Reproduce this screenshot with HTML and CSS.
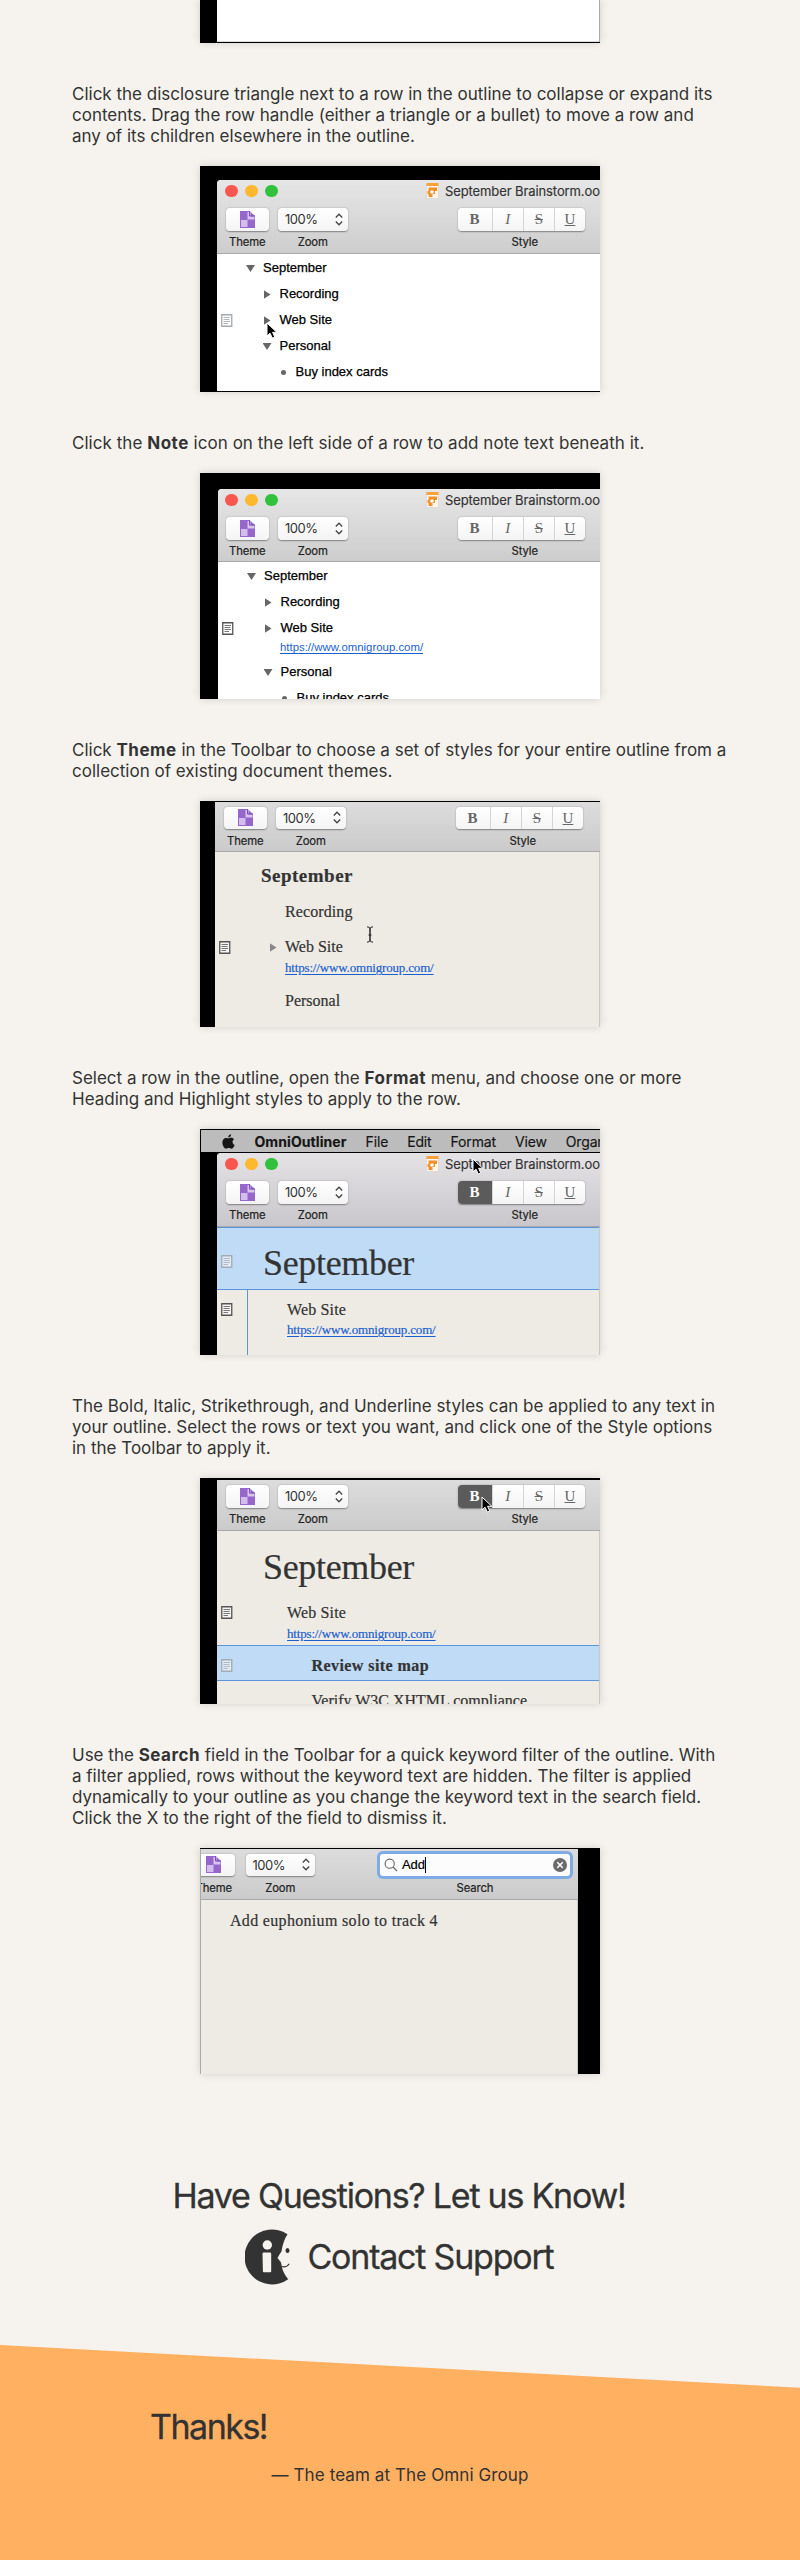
FILE: index.html
```html
<!DOCTYPE html>
<html lang="en">
<head>
<meta charset="utf-8">
<title>OmniOutliner Basics</title>
<link rel="stylesheet" href="styles.css">
</head>
<body>
<svg width="0" height="0" class="defs" aria-hidden="true">
  <symbol id="theme" viewBox="0 0 15 17"><path d="M0 0h9.5L15 5v12H0z" fill="#9566cc"/><path d="M7.5 1v7.500h7V5.500h-4V1z" fill="#d9c4ef"/><path d="M1 9h6.500v7H1z" fill="#d3bdeb"/><path d="M9.500 0v5H15" fill="none" stroke="#7c50b4"/></symbol>
  <symbol id="stepper" viewBox="0 0 8 13"><path d="M.8 4.500 4 1.200l3.200 3.300M.8 8.500 4 11.800l3.200-3.300" fill="none" stroke="#444" stroke-width="1.300"/></symbol>
  <symbol id="note" viewBox="0 0 12 13"><path d="M.75.75h10v11.500h-10z" fill="#fff" fill-opacity=".5" stroke="currentColor" stroke-width="1.300"/><path d="M2.500 3.500h6.500M2.500 5.500h6M2.500 7.500h6.500M2.500 9.500h4.500" stroke="currentColor" stroke-width=".8"/></symbol>
  <symbol id="doc" viewBox="0 0 13 16"><path d="M.5.500h12v15H.5z" fill="#fbf6ef" stroke="#d9d0c6" stroke-width=".6"/><path d="M.5 0h12v3H.5z" fill="#f7a13a"/><path d="M2.500 4.500h8.500v3.500H9v3H6.500v3H2.500V11H1.500V8h1z" fill="#f19128"/><path d="M4 9h4M6 7v4" stroke="#fff" stroke-width="1.300"/></symbol>
  <symbol id="pointer" viewBox="0 0 12 18"><path d="M1 1v13l3-2.800L6.300 16l2.400-1.100L6.600 10.300h4.200z" fill="#000" stroke="#fff" stroke-width="1"/></symbol>
</svg>

<main class="guide">
  <figure class="shot tail"><div class="blank"></div></figure>

  <p>Click the disclosure triangle next to a row in the outline to collapse or expand its<br>contents. Drag the row handle (either a triangle or a bullet) to move a row and<br>any of its children elsewhere in the outline.</p>
  <figure class="shot first">
    <div class="window">
      <div class="head">
        <div class="title"><i class="light red"></i><i class="light amber"></i><i class="light green"></i><svg class="doc"><use href="#doc"/></svg><span>September Brainstorm.oo</span></div>
        <div class="tools">
          <div class="tool t-theme"><div class="btn"><svg class="i-theme"><use href="#theme"/></svg></div><span>Theme</span></div>
          <div class="tool t-zoom"><div class="btn"><span class="pct">100%</span><svg class="i-step"><use href="#stepper"/></svg></div><span>Zoom</span></div>
          <div class="tool t-style"><div class="btn"><b>B</b><em>I</em><s>S</s><u>U</u></div><span>Style</span></div>
        </div>
      </div>
      <div class="outline plain">
        <div class="row l0"><i class="slot"></i><i class="down"></i><span>September</span></div>
        <div class="row l1"><i class="slot"></i><i class="right"></i><span>Recording</span></div>
        <div class="row l1"><svg class="slot pale"><use href="#note"/></svg><i class="right"></i><span>Web Site</span></div>
        <div class="row l1"><i class="slot"></i><i class="down"></i><span>Personal</span></div>
        <div class="row l2"><i class="slot"></i><i class="dot"></i><span>Buy index cards</span></div>
      </div>
    </div>
    <svg class="pointer p1"><use href="#pointer"/></svg>
  </figure>

  <p class="loose">Click the <strong>Note</strong> icon on the left side of a row to add note text beneath it.</p>
  <figure class="shot second">
    <div class="window">
      <div class="head">
        <div class="title"><i class="light red"></i><i class="light amber"></i><i class="light green"></i><svg class="doc"><use href="#doc"/></svg><span>September Brainstorm.oo</span></div>
        <div class="tools">
          <div class="tool t-theme"><div class="btn"><svg class="i-theme"><use href="#theme"/></svg></div><span>Theme</span></div>
          <div class="tool t-zoom"><div class="btn"><span class="pct">100%</span><svg class="i-step"><use href="#stepper"/></svg></div><span>Zoom</span></div>
          <div class="tool t-style"><div class="btn"><b>B</b><em>I</em><s>S</s><u>U</u></div><span>Style</span></div>
        </div>
      </div>
      <div class="outline plain">
        <div class="row l0"><i class="slot"></i><i class="down"></i><span>September</span></div>
        <div class="row l1"><i class="slot"></i><i class="right"></i><span>Recording</span></div>
        <div class="row l1"><svg class="slot"><use href="#note"/></svg><i class="right"></i><span>Web Site</span></div>
        <div class="memo"><a>https://www.omnigroup.com/</a></div>
        <div class="row l1"><i class="slot"></i><i class="down"></i><span>Personal</span></div>
        <div class="row l2"><i class="slot"></i><i class="dot"></i><span>Buy index cards</span></div>
      </div>
    </div>
  </figure>

  <p>Click <strong>Theme</strong> in the Toolbar to choose a set of styles for your entire outline from a<br>collection of existing document themes.</p>
  <figure class="shot third">
    <div class="window">
      <div class="head">
        <div class="tools">
          <div class="tool t-theme"><div class="btn"><svg class="i-theme"><use href="#theme"/></svg></div><span>Theme</span></div>
          <div class="tool t-zoom"><div class="btn"><span class="pct">100%</span><svg class="i-step"><use href="#stepper"/></svg></div><span>Zoom</span></div>
          <div class="tool t-style"><div class="btn"><b>B</b><em>I</em><s>S</s><u>U</u></div><span>Style</span></div>
        </div>
      </div>
      <div class="outline book">
        <div class="row h2"><i class="slot"></i><span>September</span></div>
        <div class="row r-rec"><i class="slot"></i><span>Recording</span></div>
        <div class="row r-web"><svg class="slot"><use href="#note"/></svg><i class="right"></i><span>Web Site</span></div>
        <div class="memo"><a>https://www.omnigroup.com/</a></div>
        <div class="row r-per"><i class="slot"></i><span>Personal</span></div>
      </div>
    </div>
    <svg class="ibeam" viewBox="0 0 8 17"><path d="M1 .8Q4 .8 4 3v11q0 2.200-3 2.200M7 .8Q4 .8 4 3v11q0 2.200 3 2.200M2.500 9h3" fill="none" stroke="#222"/></svg>
  </figure>

  <p>Select a row in the outline, open the <strong>Format</strong> menu, and choose one or more<br>Heading and Highlight styles to apply to the row.</p>
  <figure class="shot fourth">
    <div class="menubar"><svg class="apple" viewBox="0 0 14 16"><path d="M9.800.2c.1 1.800-1.300 3.400-3 3.400C6.600 1.900 8.200.4 9.800.2zM7 4.600c.8 0 1.700-.7 3.100-.7 1.100 0 2.300.6 3 1.700-2.600 1.500-2.200 5 .5 6.100-.7 1.900-2 4-3.400 4-1.100 0-1.500-.7-2.900-.7s-1.900.7-2.900.7C2.600 15.700.4 12.300.4 9c0-3.200 2-4.900 3.900-4.900 1.200 0 2.100.5 2.700.5z" fill="#151515"/></svg><strong>OmniOutliner</strong><span>File</span><span>Edit</span><span>Format</span><span>View</span><span>Organ</span></div>
    <div class="window">
      <div class="head">
        <div class="title"><i class="light red"></i><i class="light amber"></i><i class="light green"></i><svg class="doc"><use href="#doc"/></svg><span>September Brainstorm.oo</span></div>
        <div class="tools">
          <div class="tool t-theme"><div class="btn"><svg class="i-theme"><use href="#theme"/></svg></div><span>Theme</span></div>
          <div class="tool t-zoom"><div class="btn"><span class="pct">100%</span><svg class="i-step"><use href="#stepper"/></svg></div><span>Zoom</span></div>
          <div class="tool t-style"><div class="btn"><b class="on">B</b><em>I</em><s>S</s><u>U</u></div><span>Style</span></div>
        </div>
      </div>
      <div class="outline book">
        <div class="row h1 picked"><svg class="slot pale"><use href="#note"/></svg><span>September</span></div>
        <div class="kids">
          <div class="row r-site"><svg class="slot"><use href="#note"/></svg><span>Web Site</span></div>
          <div class="memo"><a>https://www.omnigroup.com/</a></div>
        </div>
      </div>
    </div>
    <svg class="pointer p4"><use href="#pointer"/></svg>
  </figure>

  <p>The Bold, Italic, Strikethrough, and Underline styles can be applied to any text in<br>your outline. Select the rows or text you want, and click one of the Style options<br>in the Toolbar to apply it.</p>
  <figure class="shot fifth">
    <div class="window">
      <div class="head">
        <div class="tools">
          <div class="tool t-theme"><div class="btn"><svg class="i-theme"><use href="#theme"/></svg></div><span>Theme</span></div>
          <div class="tool t-zoom"><div class="btn"><span class="pct">100%</span><svg class="i-step"><use href="#stepper"/></svg></div><span>Zoom</span></div>
          <div class="tool t-style"><div class="btn"><b class="on">B</b><em>I</em><s>S</s><u>U</u></div><span>Style</span></div>
        </div>
      </div>
      <div class="outline book">
        <div class="row h1"><i class="slot"></i><span>September</span></div>
        <div class="row r-site"><svg class="slot"><use href="#note"/></svg><span>Web Site</span></div>
        <div class="memo"><a>https://www.omnigroup.com/</a></div>
        <div class="row r-deep picked"><svg class="slot pale"><use href="#note"/></svg><strong>Review site map</strong></div>
        <div class="row r-deep last"><i class="slot"></i><span>Verify W3C XHTML compliance</span></div>
      </div>
    </div>
    <svg class="pointer p5"><use href="#pointer"/></svg>
  </figure>

  <p>Use the <strong>Search</strong> field in the Toolbar for a quick keyword filter of the outline. With<br>a filter applied, rows without the keyword text are hidden. The filter is applied<br>dynamically to your outline as you change the keyword text in the search field.<br>Click the X to the right of the field to dismiss it.</p>
  <figure class="shot sixth">
    <div class="window">
      <div class="head">
        <div class="tools">
          <div class="tool t-theme"><div class="btn"><svg class="i-theme"><use href="#theme"/></svg></div><span>Theme</span></div>
          <div class="tool t-zoom"><div class="btn"><span class="pct">100%</span><svg class="i-step"><use href="#stepper"/></svg></div><span>Zoom</span></div>
          <div class="tool t-search"><div class="field"><svg class="glass" viewBox="0 0 14 14"><path d="M10.300 5.700a4.600 4.600 0 1 1-9.200 0 4.600 4.600 0 0 1 9.200 0zM9 9l4 4" fill="none" stroke="#666" stroke-width="1.100"/></svg><span class="typed">Add</span><svg class="clear" viewBox="0 0 14 14"><circle cx="7" cy="7" r="7" fill="#6b6b6b"/><path d="m4.300 4.300 5.400 5.400m0-5.400L4.300 9.700" stroke="#fff" stroke-width="1.600"/></svg></div><span>Search</span></div>
        </div>
      </div>
      <div class="outline book"><div class="row hit">Add euphonium solo to track 4</div></div>
    </div>
  </figure>
</main>

<section class="support">
  <h2>Have Questions? Let us Know!</h2>
  <h2 class="contact"><svg viewBox="0 0 46 56"><path d="M42.500 5.200A27.500 27.500 0 1 0 43.200 50.200Q38 44 36.800 37.500 37 33 34.300 31.300L32.500 29Q34.500 25 36.500 22.500 38 12 42.500 5.200z" fill="#333"/><circle cx="22.300" cy="16" r="4.700" fill="#f6f3ee"/><path d="M17.500 24.800q0-1.300 1.300-1.300h6.100q1.300 0 1.300 1.300v17.500q0 1-1 1h-6.300q-1 0-1-1z" fill="#f6f3ee"/><ellipse cx="42.500" cy="21.500" rx="2" ry="2.600" fill="#333"/><path d="M36.500 37.500q5 1.500 7.800-2.800" fill="none" stroke="#333" stroke-width="1.100"/></svg><span>Contact Support</span></h2>
</section>

<footer class="thanks">
  <h2>Thanks!</h2>
  <p>— The team at The Omni Group</p>
</footer>
</body>
</html>
```
FILE: styles.css
```css
* { box-sizing: border-box; }
body { margin: 0; background: #f6f3ee; color: #333; font: 17px/21px Inter, sans-serif; }
i { font-style: normal; }
svg { flex: none; }
.defs { position: absolute; }
.guide { padding: 0 72px; }
.guide p { margin: 41px 0 19px; white-space: nowrap; }
.guide p strong { font-weight: 700; letter-spacing: .5px; }
.guide .loose { letter-spacing: .04px; }

.shot { position: relative; width: 400px; height: 226px; margin: 0 auto; background: #000; overflow: hidden; box-shadow: 0 0 8px rgba(0, 0, 0, .15); }
.tail { height: 43px; padding: 0 1px 1px 17px; background: linear-gradient(90deg, #000 17px, #aaa 17px) top / 100% 42px no-repeat #000; }
.blank { height: 42px; background: #fff; border-bottom: 1px solid #ddd; }

.window { display: flex; flex-direction: column; height: 226px; margin-left: 17px; overflow: hidden; background: #fff; }
.first { padding: 14px 0 1px; }
.first .window { height: 211px; }
.second { padding-top: 16px; }
.second .window { height: 210px; margin-left: 18px; }
.first .window, .second .window, .fourth .window { border-top-left-radius: 4px; }

.head { flex: none; background: linear-gradient(#e6e6e6, #cdcdcd); border-bottom: 1px solid #a9a9a9; color: #222; }
.first .head { height: 74px; }
.second .head { height: 73px; }
.second .head > div { margin-left: -1px; }
.title { display: flex; align-items: center; height: 22px; padding-left: 8px; font-size: 13px; white-space: nowrap; letter-spacing: -.1px; color: #333; -webkit-text-stroke: .15px; }
.title span { margin-left: 6px; }
.light { flex: none; width: 12.500px; height: 12.500px; margin-right: 7.500px; border-radius: 50%; }
.red { background: #f9564f; }
.amber { background: #fcb92e; }
.green { background: #30c23c; }
.doc { width: 13px; height: 16px; margin-left: 141px; }

.tools { display: flex; height: 51px; padding: 5px 0 0 9px; }
.title + .tools { padding-top: 6px; }
.tool { display: flex; flex-direction: column; align-items: center; font-size: 11.300px; line-height: 14px; letter-spacing: -.1px; -webkit-text-stroke: .2px; }
.tool > span { margin-top: 4.500px; }
.btn { display: flex; align-items: center; width: 100%; height: 22.500px; border-radius: 4px; background: linear-gradient(#fff, #f4f4f4); box-shadow: 0 .5px 1.500px rgba(0, 0, 0, .4); overflow: hidden; -webkit-text-stroke: 0; }
.t-theme { width: 42.500px; }
.t-zoom { width: 69.500px; margin-left: 9.500px; }
.t-style { width: 127.500px; margin-left: 110px; }
.t-style > span { margin-right: -7px; }
.i-theme { width: 15px; height: 17px; margin: 0 auto; }
.t-zoom .btn { justify-content: space-between; padding: 0 5px 0 7px; font-size: 13px; letter-spacing: -.5px; color: #333; }
.i-step { width: 8px; height: 13px; }
.btn > b, .btn > em, .btn > s, .btn > u { flex: 1; height: 100%; padding-left: 0; text-align: center; font: 15px/22px "Liberation Serif", serif; color: #666; border-left: 1px solid #d5d5d5; }
.btn > b { flex: 0 0 34px; border: 0; font-weight: 700; }
.btn > em { font-style: italic; }
.btn > .on { background: #5b5b5b; color: #fff; }

.outline { flex: 1; }
.plain { padding-top: 1px; color: #000; font: 13px/26px "Liberation Sans", sans-serif; }
.plain .row { -webkit-text-stroke: .25px #000; }
.row { display: flex; align-items: center; height: 26px; padding-left: 4px; white-space: nowrap; }
.slot { flex: none; width: 12px; height: 13px; color: #555; }
.pale { color: #a4aaae; }
.down, .right, .dot { flex: none; }
.down { width: 9px; height: 7px; margin: 1px 8px 0 13px; background: #666; clip-path: polygon(0 0, 100% 0, 50% 100%); }
.right { width: 7px; height: 9px; margin: 1px 9px 0 30.500px; background: #666; clip-path: polygon(0 0, 100% 50%, 0 100%); }
.l1 .down { margin-left: 29.500px; }
.dot { width: 5px; height: 5px; margin: 1px 10px 0 47.500px; border-radius: 50%; background: #666; }
.plain .memo { height: 18px; padding-left: 62px; line-height: 13px; font-size: 11.400px; }
.memo a { color: #1a5fd0; text-decoration: underline; text-underline-offset: 1.500px; text-decoration-thickness: 1px; }

.book { background: #eeebe4; color: #333; font: 16px/20px "Liberation Serif", serif; border-right: 1px solid #ccc9c3; -webkit-text-stroke: .2px; }
.book .memo { height: 20px; padding-left: 70px; font-size: 13px; letter-spacing: -.17px; }

.third .head, .fifth .head, .sixth .head { height: 51px; background: linear-gradient(#dcdcdc, #cbcbcb); }
.third { padding-top: 1px; }
.third .window { height: 225px; margin: 0 0 0 15px; }
.third .head { height: 50px; }
.third .tools { padding-top: 4.500px; }
.third .h2 { height: 45px; padding: 3px 0 0 4px; font-size: 19px; font-weight: 700; letter-spacing: .49px; }
.third .h2 span { margin-left: 30px; }
.third .r-rec { height: 30px; letter-spacing: .1px; }
.third .r-rec span, .third .r-per span { margin-left: 54px; }
.third .r-web { height: 40px; }
.third .r-web .right { margin-left: 38.500px; margin-right: 8.500px; background: #888; }
.third .memo { height: 19px; margin-top: -9px; }
.third .r-per { height: 47px; }
.ibeam { position: absolute; left: 166px; top: 125px; width: 8px; height: 17px; }

.menubar { display: flex; align-items: center; height: 24px; padding-left: 21px; border: 1px solid #000; border-right: 0; background: #bcbcbc; color: #151515; font-size: 14px; letter-spacing: -.15px; white-space: nowrap; -webkit-text-stroke: .15px; }
.menubar span { margin-left: 19px; }
.menubar strong { margin-left: 19.500px; letter-spacing: .08px; }
.apple { width: 13px; height: 15px; }
.fourth .window { height: 202px; }
.fourth .head { height: 74px; background: linear-gradient(#e4e2e5, #c9c7cb); }
.fourth .title { padding-left: 8px; }
.h1 { font-size: 36px; letter-spacing: -.33px; line-height: 44px; }
.h1 span { margin-left: 30px; }
.picked { background: #bfdbf6; border: solid #5b95de; border-width: 1.500px 0; }
.fourth .h1 { height: 63px; padding-top: 8px; }
.fourth .h1 .slot { margin-bottom: 2px; }
.r-site span { margin-left: 54px; letter-spacing: .15px; }
.kids { height: 66px; padding-top: 6px; background: linear-gradient(#5b95de, #5b95de) 30px 0 / 1px 100% no-repeat; }
.fourth .row.r-site { height: 27px; }
.fourth .memo { margin-top: -3px; }

.fifth { padding-top: 2px; }
.fifth .window { height: 224px; margin-top: 0; }
.fifth .h1 { height: 66px; padding-top: 5px; }
.fifth .r-site { height: 31px; }
.fifth .memo { height: 21px; margin-top: -4px; }
.r-deep { height: 36px; }
.r-deep.picked { padding-top: 5px; }
.r-deep.last { padding-top: 3px; }
.r-deep strong { margin-left: 78.500px; letter-spacing: .43px; }
.r-deep span { margin-left: 78.500px; }

.sixth { padding-top: 1px; background: #000; }
.sixth .window { width: 378px; height: 225px; margin-left: 0; border-left: 1px solid #aaa; }
.sixth .tools { padding: 4.500px 0 0; }
.sixth .t-theme { margin-left: -8.500px; }
.sixth .t-zoom { margin-left: 10.500px; }
.t-search { width: 190px; margin-left: 65px; }
.sixth .t-search > span { margin-top: 4.500px; }
.field { display: flex; align-items: center; width: 190px; height: 22.500px; padding: 0 3px 0 4px; border-radius: 3px; background: #fcfcfc; box-shadow: 0 0 0 3px #7eabe6; color: #000; }
.glass { width: 14px; height: 14px; }
.typed { margin-left: 4px; border-right: 1px solid #000; font: 13px/16px "Liberation Sans", sans-serif; letter-spacing: -.1px; }
.clear { width: 14px; height: 14px; margin-left: auto; }
.hit { height: 41px; padding-left: 29px; letter-spacing: .32px; }

.pointer { position: absolute; width: 12px; height: 18px; }
.p1 { left: 66px; top: 156px; }
.p4 { left: 272px; top: 29px; }
.p5 { left: 281px; top: 18px; }

.support { display: flex; flex-direction: column; align-items: center; padding-top: 100px; height: 271px; }
h2 { margin: 0 2px 0 0; font-size: 34px; font-weight: 400; line-height: 44px; letter-spacing: -1.240px; white-space: nowrap; -webkit-text-stroke: .3px; }
.contact { display: flex; align-items: center; gap: 16px; margin: 11px 1px 0 0; letter-spacing: -1.210px; }
.contact svg { width: 46px; height: 56px; }

.thanks { height: 215px; padding: 60px 150px 0; background: #ffb061; clip-path: polygon(0 0, 100% 42.700px, 100% 100%, 0 100%); }
.thanks h2 { letter-spacing: -1.500px; }
.thanks p { margin: 16px 0 0; text-align: center; letter-spacing: .1px; }
```
